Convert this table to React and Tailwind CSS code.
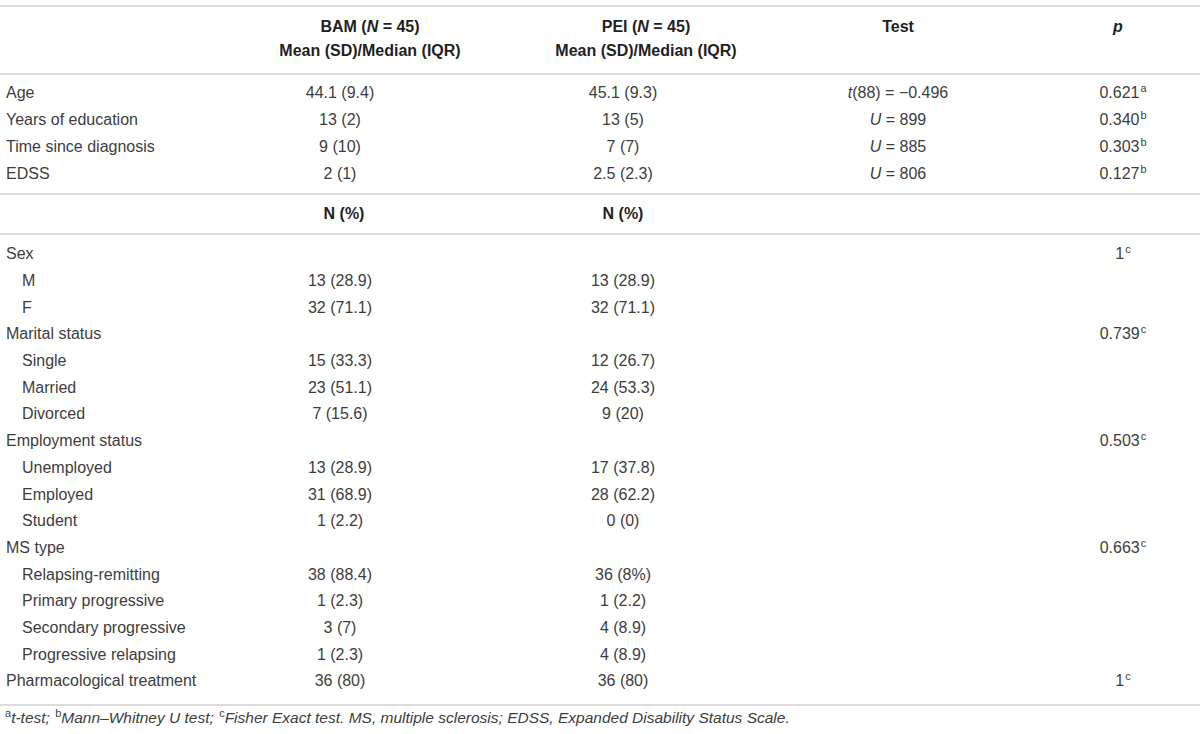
const COLS = 'grid grid-cols-[208px_324px_228px_276px_164px]'

const TOP = [
  { label: 'Age', bam: '44.1 (9.4)', pei: '45.1 (9.3)', test: <><i>t</i>(88) = −0.496</>, p: '0.621', sup: 'a' },
  { label: 'Years of education', bam: '13 (2)', pei: '13 (5)', test: <><i>U</i> = 899</>, p: '0.340', sup: 'b' },
  { label: 'Time since diagnosis', bam: '9 (10)', pei: '7 (7)', test: <><i>U</i> = 885</>, p: '0.303', sup: 'b' },
  { label: 'EDSS', bam: '2 (1)', pei: '2.5 (2.3)', test: <><i>U</i> = 806</>, p: '0.127', sup: 'b' },
]

const BOTTOM = [
  { label: 'Sex', p: '1', sup: 'c' },
  { label: 'M', sub: true, bam: '13 (28.9)', pei: '13 (28.9)' },
  { label: 'F', sub: true, bam: '32 (71.1)', pei: '32 (71.1)' },
  { label: 'Marital status', p: '0.739', sup: 'c' },
  { label: 'Single', sub: true, bam: '15 (33.3)', pei: '12 (26.7)' },
  { label: 'Married', sub: true, bam: '23 (51.1)', pei: '24 (53.3)' },
  { label: 'Divorced', sub: true, bam: '7 (15.6)', pei: '9 (20)' },
  { label: 'Employment status', p: '0.503', sup: 'c' },
  { label: 'Unemployed', sub: true, bam: '13 (28.9)', pei: '17 (37.8)' },
  { label: 'Employed', sub: true, bam: '31 (68.9)', pei: '28 (62.2)' },
  { label: 'Student', sub: true, bam: '1 (2.2)', pei: '0 (0)' },
  { label: 'MS type', p: '0.663', sup: 'c' },
  { label: 'Relapsing-remitting', sub: true, bam: '38 (88.4)', pei: '36 (8%)' },
  { label: 'Primary progressive', sub: true, bam: '1 (2.3)', pei: '1 (2.2)' },
  { label: 'Secondary progressive', sub: true, bam: '3 (7)', pei: '4 (8.9)' },
  { label: 'Progressive relapsing', sub: true, bam: '1 (2.3)', pei: '4 (8.9)' },
  { label: 'Pharmacological treatment', bam: '36 (80)', pei: '36 (80)', p: '1', sup: 'c' },
]

function Sup({ children }) {
  return <span className="relative top-[-6px] text-[11px] not-italic leading-none ml-[1px]">{children}</span>
}

function Row({ r, h }) {
  return (
    <div className={`${COLS} ${h} items-center`}>
      <div className={`${r.sub ? 'pl-[22px]' : 'pl-[6px]'} whitespace-nowrap`}>{r.label}</div>
      <div className="text-center pr-[60px]">{r.bam}</div>
      <div className="text-center pr-[46px]">{r.pei}</div>
      <div className="text-center">{r.test}</div>
      <div className="text-center pl-[10px]">
        {r.p}
        {r.sup && <Sup>{r.sup}</Sup>}
      </div>
    </div>
  )
}

export default function App() {
  return (
    <div className="w-[1200px] h-[734px] bg-white pt-[5px] text-[16px] text-[#3d3d3d] font-['Liberation_Sans',Arial,sans-serif]">
      {/* header */}
      <div className="border-t-2 border-[#dcdcdc] pt-[8px] pb-[10px] font-bold text-[#1f1f1f]">
        <div className={`${COLS} h-[24px] items-center`}>
          <div />
          <div className="text-center">BAM (<i>N</i> = 45)</div>
          <div className="text-center">PEI (<i>N</i> = 45)</div>
          <div className="text-center">Test</div>
          <div className="text-center"><i>p</i></div>
        </div>
        <div className={`${COLS} h-[24px] items-center`}>
          <div />
          <div className="text-center">Mean (SD)/Median (IQR)</div>
          <div className="text-center">Mean (SD)/Median (IQR)</div>
          <div />
          <div />
        </div>
      </div>

      {/* continuous variables */}
      <div className="border-t-2 border-[#dcdcdc] pt-[4px] pb-[6px]">
        {TOP.map(r => <Row key={r.label} r={r} h="h-[27px]" />)}
      </div>

      <div className={`${COLS} border-t-2 border-[#dcdcdc] h-[40px] items-center font-bold text-[#1f1f1f]`}>
        <div />
        <div className="text-center pr-[52px]">N (%)</div>
        <div className="text-center pr-[46px]">N (%)</div>
        <div />
        <div />
      </div>

      {/* categorical variables */}
      <div className="border-t-2 border-[#dcdcdc] pt-[6px] pb-[9px]">
        {BOTTOM.map(r => <Row key={r.label} r={r} h="h-[26.7px]" />)}
      </div>

      <div className="border-t-2 border-[#dcdcdc] pt-[3px] pl-[4px] h-[22px] text-[15.5px] italic leading-[18px] whitespace-nowrap">
        <Sup>a</Sup>t-test; <Sup>b</Sup>Mann–Whitney U test; <Sup>c</Sup>Fisher Exact test. MS, multiple sclerosis; EDSS, Expanded Disability Status Scale.
      </div>
    </div>
  )
}
